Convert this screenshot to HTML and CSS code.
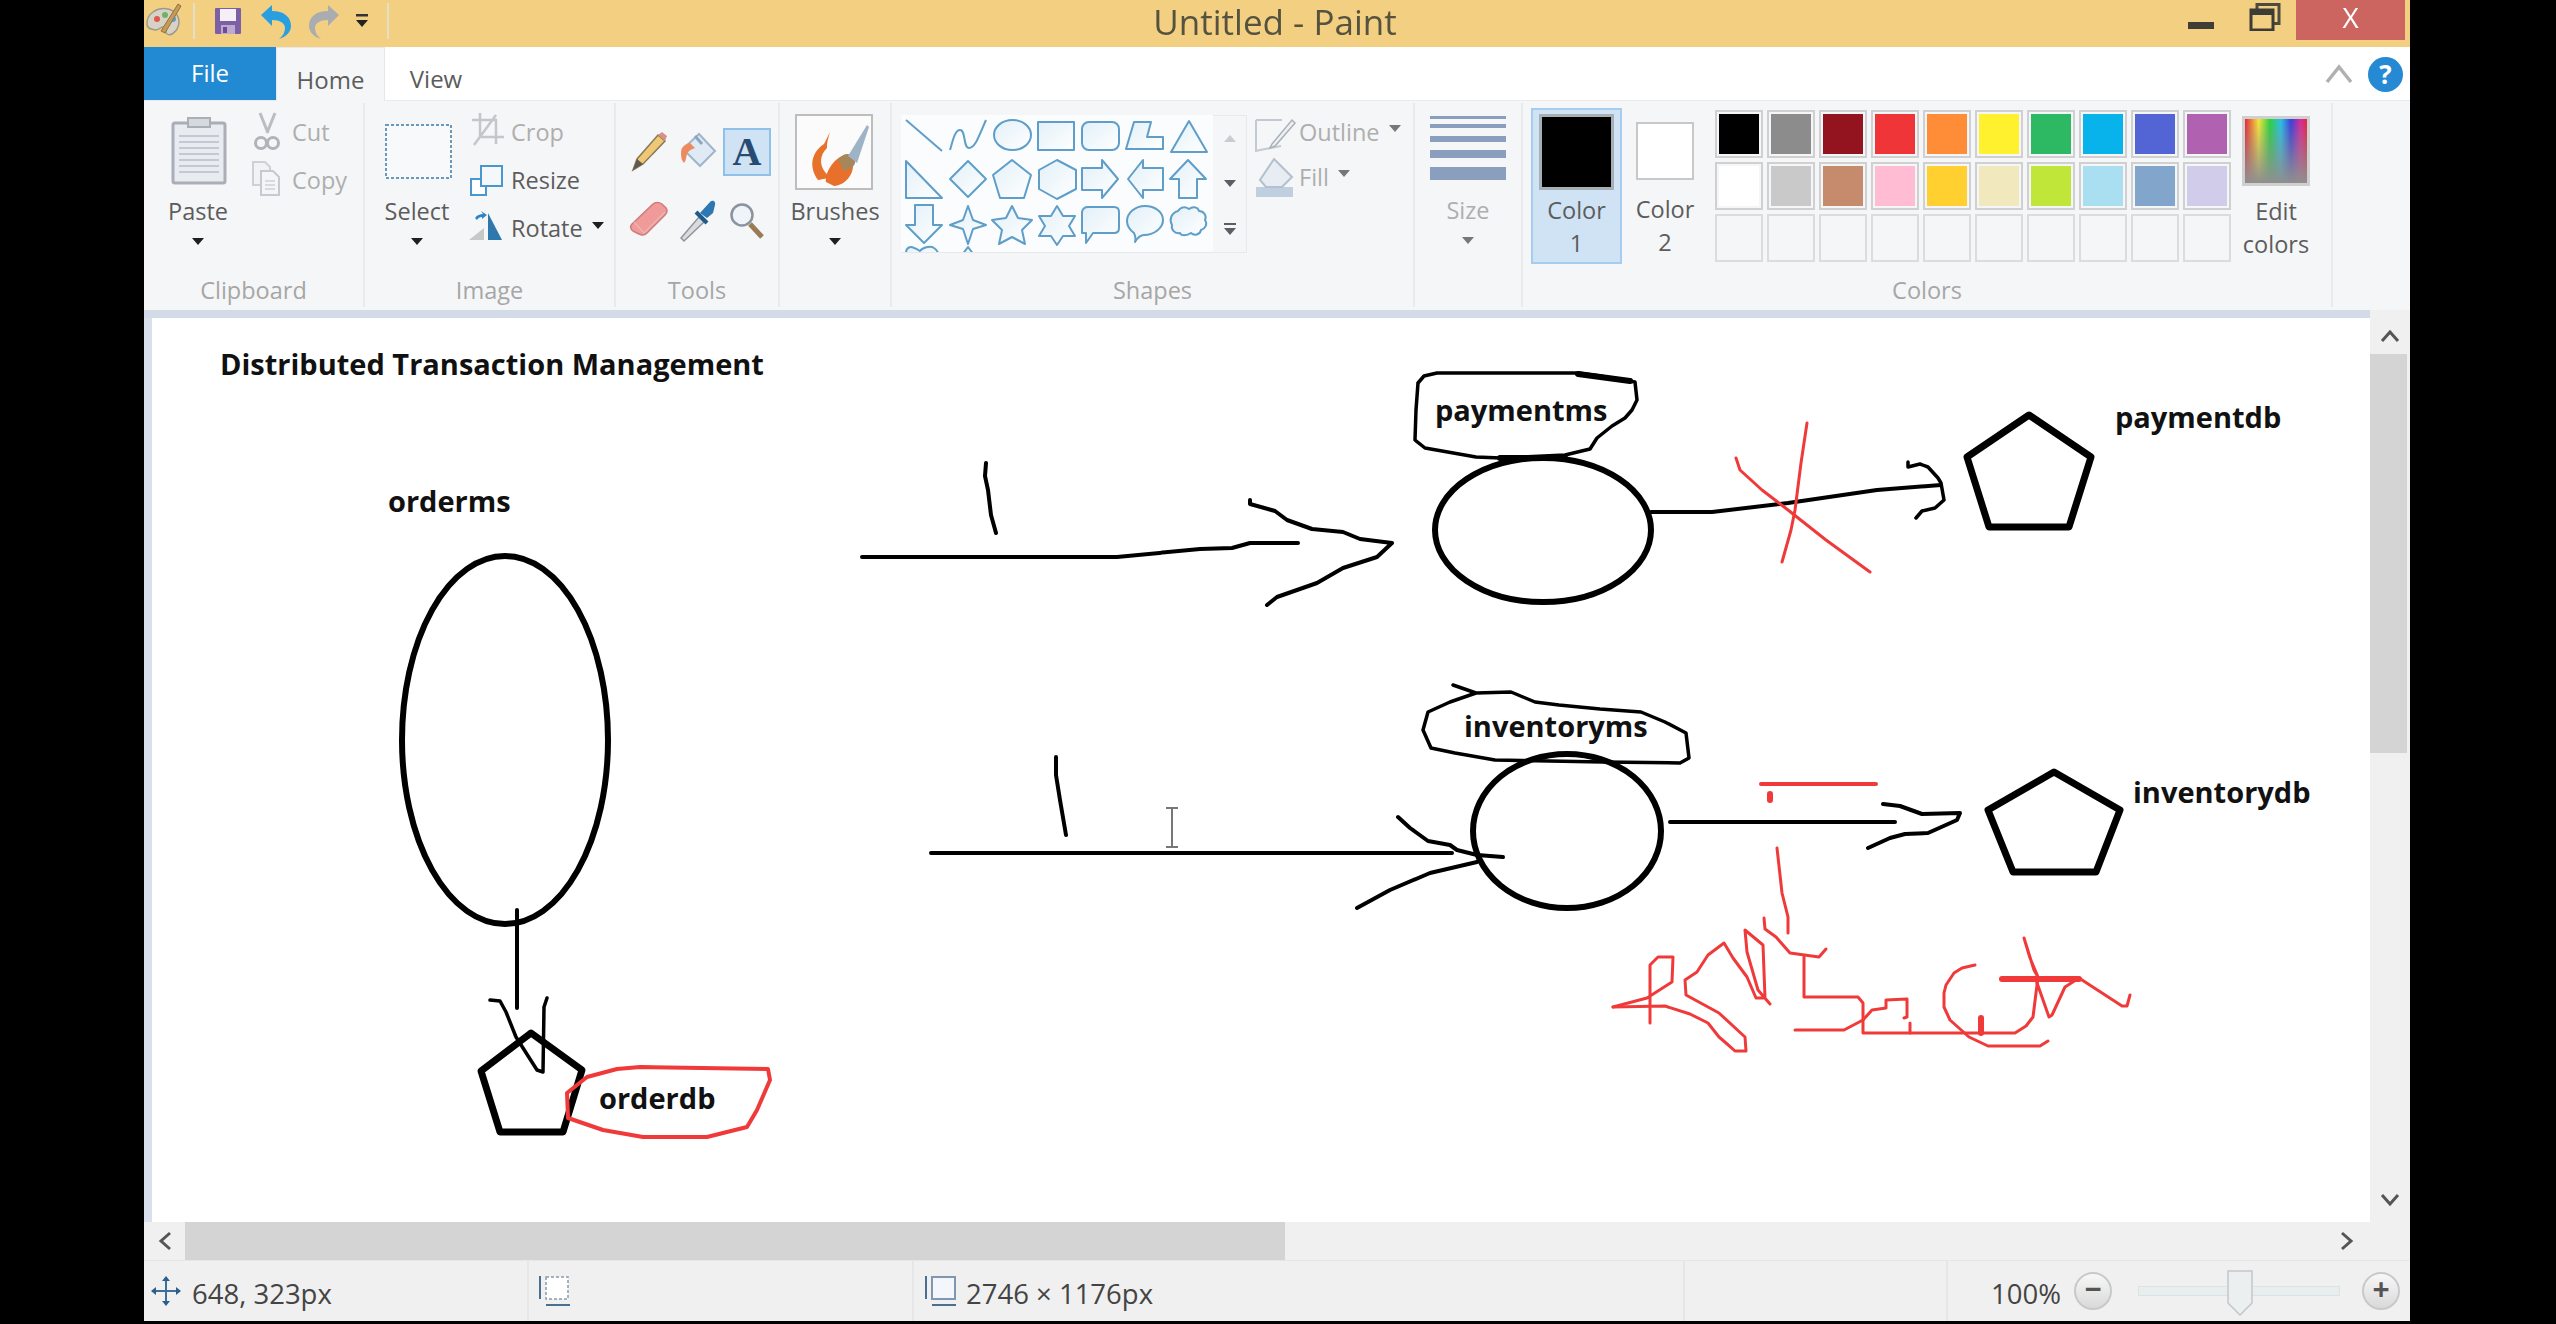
FILE: index.html
```html
<!DOCTYPE html>
<html lang="en">
<head>
<meta charset="utf-8">
<title>Untitled - Paint</title>
<link rel="stylesheet" href="styles.css">
</head>
<body>
<div class="window">
  <header class="titlebar">
    <div class="qat">
      <svg class="qat-icon" width="40" height="40" viewBox="0 0 40 40"><path d="M3 24C2 12 14 6 24 8c9 2 13 10 10 18-2 6-8 9-11 7-3-2 1-6-3-7-4-1-5 4-9 3-4-1-7-1-8-5z" fill="#d8d2c4" stroke="#9a9a90" stroke-width="1.5"/><circle cx="13" cy="18" r="3" fill="#e0574f"/><circle cx="21" cy="14" r="3" fill="#6eb26a"/><circle cx="29" cy="18" r="3" fill="#5a9bd5"/><path d="M17 30L34 3l3 2-16 27z" fill="#c99a55" stroke="#8d7440"/></svg>
      <span class="qat-sep"></span>
      <svg class="qat-save" width="28" height="28" viewBox="0 0 28 28"><rect x="1" y="1" width="26" height="26" rx="1" fill="#7d5fa6"/><rect x="6" y="2" width="16" height="12" fill="#f4f0f5"/><rect x="7" y="18" width="14" height="9" fill="#bda9cf"/><rect x="9" y="20" width="4" height="6" fill="#6a4d92"/></svg>
      <svg class="qat-undo" width="34" height="36" viewBox="0 0 34 36"><path d="M2 12L13 2v6c12 0 19 6 19 15 0 6-5 11-12 13 4-3 6-7 6-11 0-5-5-8-13-8v6z" fill="#2a9fe0"/></svg>
      <svg class="qat-redo" width="34" height="36" viewBox="0 0 34 36"><path d="M32 12L21 2v6C9 8 2 14 2 23c0 6 5 11 12 13-4-3-6-7-6-11 0-5 5-8 13-8v6z" fill="#a9adb0"/></svg>
      <svg class="qat-caret" width="14" height="16" viewBox="0 0 14 16"><rect x="1" y="1" width="12" height="2.5" fill="#333"/><path d="M1 7h12l-6 7z" fill="#222"/></svg>
      <span class="qat-sep"></span>
    </div>
    <div class="title">Untitled - Paint</div>
    <div class="winbtns">
      <span class="min"></span>
      <svg class="restore" width="32" height="28" viewBox="0 0 32 28"><rect x="8" y="1.500" width="22" height="19" fill="none" stroke="#4d4a42" stroke-width="3"/><rect x="2" y="7" width="22" height="20" fill="#f3cf82" stroke="#3d3b35" stroke-width="3"/><rect x="2" y="7" width="22" height="5" fill="#3d3b35"/></svg>
      <span class="close">X</span>
    </div>
  </header>

  <nav class="tabs">
    <span class="tab-file">File</span>
    <span class="tab-home">Home</span>
    <span class="tab-view">View</span>
    <span class="tabs-space"></span>
    <svg class="chev" width="28" height="20" viewBox="0 0 28 20"><path d="M2 18L14 3l12 15" fill="none" stroke="#aeb0b2" stroke-width="3.500"/></svg>
    <span class="help">?</span>
  </nav>

  <section class="ribbon">
    <div class="group g-clip">
      <div class="body">
        <div class="big">
          <svg class="big-ic" width="80" height="80" viewBox="158 117 80 80"><rect x="173" y="123" width="52" height="60" rx="2" fill="#e8ebf0" stroke="#a9aeb7" stroke-width="3"/><rect x="188" y="118" width="22" height="9" fill="#d6d9dd" stroke="#a9aeb7" stroke-width="2"/><path d="M179 136h40M179 142h40M179 148h40M179 154h40M179 160h40M179 166h40M179 172h40" stroke="#c3c8d2" stroke-width="2"/></svg>
          <span class="big-label">Paste</span>
          <span class="caret"></span>
        </div>
        <div class="small-col">
          <div class="row">
            <svg class="row-ic" width="40" height="40" viewBox="250 113 40 40"><path d="M262 114l8 20M277 114l-8 20" stroke="#b9bdc2" stroke-width="3"/><circle cx="263" cy="144" r="5.500" fill="none" stroke="#b0b4b9" stroke-width="3"/><circle cx="275" cy="144" r="5.500" fill="none" stroke="#b0b4b9" stroke-width="3"/></svg>
            <span class="muted">Cut</span>
          </div>
          <div class="row">
            <svg class="row-ic" width="40" height="40" viewBox="250 161 40 40"><path d="M255 163h12l5 5v18h-17z" fill="#f0f2f4" stroke="#cdd1d6" stroke-width="2"/><path d="M263 172h12l6 6v18h-18z" fill="#f4f5f7" stroke="#c6cad0" stroke-width="2"/><path d="M267 182h10M267 186h10M267 190h10" stroke="#cdd1d6" stroke-width="1.500"/></svg>
            <span class="muted">Copy</span>
          </div>
        </div>
      </div>
      <div class="group-label">Clipboard</div>
    </div>

    <div class="group g-image">
      <div class="body">
        <div class="big">
          <svg class="big-ic" width="80" height="80" viewBox="377 117 80 80"><rect x="386" y="125" width="65" height="53" fill="#f8f9fa" stroke="#6d98b8" stroke-width="2" stroke-dasharray="3 2"/></svg>
          <span class="big-label">Select</span>
          <span class="caret"></span>
        </div>
        <div class="small-col">
          <div class="row">
            <svg class="row-ic" width="40" height="40" viewBox="467 113 40 40"><path d="M472 121h24v24M480 114v24h24M496 116l-22 30" fill="none" stroke="#c3c7cc" stroke-width="2.500"/></svg>
            <span class="muted">Crop</span>
          </div>
          <div class="row">
            <svg class="row-ic" width="40" height="40" viewBox="467 161 40 40"><rect x="471" y="180" width="15" height="16" fill="#fff" stroke="#4a96cf" stroke-width="2"/><rect x="481" y="167" width="21" height="20" fill="#f5f8fb" stroke="#4a96cf" stroke-width="2"/></svg>
            <span>Resize</span>
          </div>
          <div class="row">
            <svg class="row-ic" width="40" height="40" viewBox="467 209 40 40"><path d="M469 241l15-12v12z" fill="#c5c9c8"/><path d="M488 214l14 27h-14z" fill="#2f78ad"/><path d="M475 219c2-3 5-4 8-4l-2-3 6 4-5 4v-2c-2 0-4 1-5 3z" fill="#2a86c8"/></svg>
            <span>Rotate</span><span class="caret inline"></span>
          </div>
        </div>
      </div>
      <div class="group-label">Image</div>
    </div>

    <div class="group g-tools">
      <div class="tool-grid">
        <svg width="48" height="48" viewBox="625 128 48 48"><path d="M633 170l4-11 21-24 7 6-22 23z" fill="#eec878" stroke="#8a7a50" stroke-width="1.500"/><path d="M633 170l4-11 6 5z" fill="#5f5a4f"/><path d="M658 135l7 6 2-5-5-4z" fill="#d98f8a"/></svg>
        <svg width="48" height="48" viewBox="674 128 48 48"><path d="M699 134l16 17-15 15-17-17z" fill="#dfeaf5" stroke="#9fb5ca" stroke-width="2"/><path d="M695 136l7 8" stroke="#8da7c0" stroke-width="3"/><path d="M690 143c-5 1-9 4-9 10 0 5 1 8 3 10 2-2 2-6 3-9 1-3 5-5 8-6z" fill="#ee8a5f"/></svg>
        <span class="tool-a">A</span>
        <svg width="48" height="48" viewBox="625 195 48 48"><path d="M632 224l21-20c2-2 6-2 9 0l4 4c2 3 1 5-1 7l-18 18c-3 3-6 2-8 1l-6-3c-3-2-3-5-1-7z" fill="#f19a9a" stroke="#d17a7a" stroke-width="1.500"/><path d="M634 222l10 11 21-21" fill="none" stroke="#e8b6b2" stroke-width="1.500"/></svg>
        <svg width="48" height="48" viewBox="674 195 48 48"><path d="M681 238l18-21 5 5-20 19z" fill="#d9dcdf" stroke="#8f959b" stroke-width="1.500"/><path d="M700 213l10-11c3-3 6 0 5 3l-2 8-6 5z" fill="#2d77b2"/><path d="M696 212l11 11" stroke="#1d5b8c" stroke-width="4"/></svg>
        <svg width="48" height="48" viewBox="723 195 48 48"><circle cx="742" cy="215" r="10.500" fill="#eef4f9" stroke="#8b949c" stroke-width="2.500"/><path d="M750 224l12 13" stroke="#9a7b55" stroke-width="5"/></svg>
      </div>
      <div class="group-label tools-label">Tools</div>
    </div>

    <div class="group g-brush">
      <div class="body">
        <div class="big">
          <svg class="big-ic" width="80" height="80" viewBox="795 117 80 80"><rect x="796" y="115" width="76" height="74" fill="#fbfbfb" stroke="#bdbdbd" stroke-width="2"/><path d="M818 180c-10-14-6-28 6-36l6-12c-3 10-3 12-3 16-7 7-8 16-2 24 5 6 5 6-7 8z" fill="#e7722b"/><path d="M826 182c-2-8 8-24 17-26l10 7c1 12-8 22-19 23z" fill="#e8702a"/><path d="M838 160c3-5 7-6 10-6 5 1 8 5 7 9-1 4-6 7-11 8z" fill="#a8865c"/><path d="M848 156l19-31 2 2-12 36z" fill="#9eb3c6"/></svg>
          <span class="big-label">Brushes</span>
          <span class="caret"></span>
        </div>
      </div>
      <div class="group-label">&nbsp;</div>
    </div>

    <div class="group g-shapes">
      <div class="body shapes-body">
        <div class="gallery">
          <svg class="gal-svg" width="312" height="138" viewBox="901 115 312 138">
            <defs>
              <linearGradient id="sg" x1="0" y1="0" x2="1" y2="1"><stop offset="0" stop-color="#e2f0f8"/><stop offset="1" stop-color="#ffffff"/></linearGradient>
            </defs>
            <g class="sh">
              <path d="M906 120l36 31" fill="none"/>
              <path d="M950 150c3-10 5-20 10-20 6 0 3 18 9 18s9-10 17-28" fill="none"/>
              <ellipse cx="1012.500" cy="135" rx="18.500" ry="15"/>
              <rect x="1038" y="122" width="36" height="28"/>
              <rect x="1082" y="122" width="37" height="28" rx="7"/>
              <path d="M1126 149l8-27h17l-4 15h16v12z"/>
              <path d="M1189 121l18 31h-36z"/>
              <path d="M906 161l36 37h-36z"/>
              <path d="M968 161l18 18-18 18-18-18z"/>
              <path d="M1012 160l19 15-7 23h-24l-7-23z"/>
              <path d="M1057 160l19 10v19l-19 10-18-10v-19z"/>
              <path d="M1082 168h20v-8l16 19-16 19v-8h-20z"/>
              <path d="M1163 168h-20v-8l-15 19 15 19v-8h20z"/>
              <path d="M1188 160l18 19h-9v19h-18v-19h-9z"/>
              <path d="M915 205h18v20h9l-18 18-18-18h9z"/>
              <path d="M968 206l5 14 13 5-13 4-5 15-5-15-13-4 13-5z"/>
              <path d="M1012 206l6 12 14 2-10 10 3 14-13-7-13 7 3-14-10-10 14-2z"/>
              <path d="M1057 206l6 10h12l-6 10 6 10h-12l-6 9-6-9h-12l6-10-6-10h12z"/>
              <path d="M1088 207h26q5 0 5 5v16q0 5-5 5h-21l-7 10v-10h-4l0-21q1-5 6-5z"/>
              <path d="M1145 206c10 0 18 6 18 14s-9 15-19 15c-3 0-6 2-9 7 1-4 0-7-1-9-4-3-7-7-7-12 0-8 8-15 18-15z"/>
              <path d="M1178 211c3-5 8-4 11-2 4-3 9-2 10 2 5 0 8 5 6 9 3 4 0 9-4 10-1 5-7 6-10 3-4 3-10 3-11 0-6 1-9-4-8-8-3-5-1-12 6-14z"/>
              <path d="M906 253c0-6 5-7 8-5 4 1 5 3 6 3 2-3 10-6 14-3 3 2 5 6 5 8z"/>
              <path d="M968 247l6 8h-12z"/>
            </g>
          </svg>
        </div>
        <div class="gal-scroll">
          <span class="gs-btn"><i class="up"></i></span>
          <span class="gs-btn"><i class="down"></i></span>
          <span class="gs-btn"><b class="bar"></b><i class="down"></i></span>
        </div>
        <div class="small-col tight">
          <div class="row">
            <svg class="row-ic" width="40" height="40" viewBox="1255 113 40 40"><path d="M1256 121h26M1256 121v31l4-1 21-4" fill="none" stroke="#c3cad1" stroke-width="2"/><path d="M1272 145l20-24 3 3-20 23-5 2z" fill="#eef1f4" stroke="#aab1b9" stroke-width="1.500"/></svg>
            <span class="muted">Outline</span><span class="caret inline grey"></span>
          </div>
          <div class="row">
            <svg class="row-ic" width="40" height="40" viewBox="1255 158 40 40"><rect x="1256" y="188" width="37" height="10" fill="#bfcfe0"/><path d="M1274 160l18 18-10 10h-16l-6-7z" fill="#e7edf3" stroke="#b3c0cd" stroke-width="2"/></svg>
            <span class="muted">Fill</span><span class="caret inline grey"></span>
          </div>
        </div>
      </div>
      <div class="group-label">Shapes</div>
    </div>

    <div class="group g-size">
      <div class="body">
        <div class="big">
          <div class="size-lines">
            <i class="l1"></i><i class="l2"></i><i class="l3"></i><i class="l4"></i><i class="l5"></i>
          </div>
          <span class="big-label muted">Size</span>
          <span class="caret grey"></span>
        </div>
      </div>
      <div class="group-label">&nbsp;</div>
    </div>

    <div class="group g-colors">
      <div class="body colors-body">
        <div class="color-btn active">
          <span class="sw1"></span>
          <span class="color-text">Color<br>1</span>
        </div>
        <div class="color-btn second">
          <span class="sw2"></span>
          <span class="color-text">Color<br>2</span>
        </div>
        <div class="palette">
          <span class="cell"><i class="c-000"></i></span><span class="cell"><i class="c-gry"></i></span><span class="cell"><i class="c-dred"></i></span><span class="cell"><i class="c-red"></i></span><span class="cell"><i class="c-org"></i></span><span class="cell"><i class="c-yel"></i></span><span class="cell"><i class="c-grn"></i></span><span class="cell"><i class="c-cyn"></i></span><span class="cell"><i class="c-blu"></i></span><span class="cell"><i class="c-pur"></i></span>
          <span class="cell"><i class="c-wht"></i></span><span class="cell"><i class="c-lgr"></i></span><span class="cell"><i class="c-brn"></i></span><span class="cell"><i class="c-pnk"></i></span><span class="cell"><i class="c-gld"></i></span><span class="cell"><i class="c-crm"></i></span><span class="cell"><i class="c-lim"></i></span><span class="cell"><i class="c-sky"></i></span><span class="cell"><i class="c-stl"></i></span><span class="cell"><i class="c-lav"></i></span>
          <span class="cell empty"></span><span class="cell empty"></span><span class="cell empty"></span><span class="cell empty"></span><span class="cell empty"></span><span class="cell empty"></span><span class="cell empty"></span><span class="cell empty"></span><span class="cell empty"></span><span class="cell empty"></span>
        </div>
        <div class="edit-col">
          <span class="rainbow"></span>
          <span class="color-text">Edit<br>colors</span>
        </div>
      </div>
      <div class="group-label">Colors</div>
    </div>
  </section>
  <div class="band"></div>

  <main class="work">
    <svg class="drawing" width="2218" height="904" viewBox="152 318 2218 904">
      <text class="lbl" x="220" y="375">Distributed Transaction Management</text>
      <text class="lbl" x="388" y="512">orderms</text>
      <text class="lbl" x="1435" y="421">paymentms</text>
      <text class="lbl" x="2115" y="428">paymentdb</text>
      <text class="lbl" x="1464" y="737">inventoryms</text>
      <text class="lbl" x="2133" y="803">inventorydb</text>
      <text class="lbl" x="599" y="1109">orderdb</text>

      <g class="ink">
        <ellipse class="w6" cx="505" cy="740" rx="103" ry="184"/>
        <path class="w4" d="M517 910V1008"/>
        <path class="w3" d="M490 1000L500 1001 506 1012 516 1037 537 1070 543 1072 544 1007 547 998"/>
        <path class="w7" d="M531 1033L582 1070 563 1132H500L481 1071Z"/>

        <path class="w4" d="M986 463L985 476 988 490 991 515 996 533"/>
        <path class="w4" d="M862 557H1117L1200 549 1232 548 1250 543H1298"/>
        <path class="w4" d="M1250 500V504L1275 511 1287 520 1312 529 1343 532 1360 539 1392 543 1377 557 1343 568 1317 583 1277 597 1267 605"/>

        <path class="w3" d="M1418 383L1424 376 1437 373H1578L1600 376 1635 382 1637 400 1632 410 1625 418 1612 426 1597 438 1590 449 1565 455 1501 458 1476 457 1425 448 1415 440 1416 410 1418 383"/>
        <path class="w6" d="M1578 374L1630 381"/>
        <path class="w6" d="M1500 458H1565"/>
        <ellipse class="w6" cx="1543" cy="530" rx="108" ry="72"/>
        <path class="w4" d="M1651 512H1712L1788 503 1877 490 1941 485"/>
        <path class="w3" d="M1908 462V467L1920 464 1928 467 1938 478 1941 483 1944 500 1935 508 1922 511 1916 518"/>
        <path class="w7" d="M2029 415L2091 457 2069 527H1989L1967 457Z"/>

        <path class="w3" d="M1453 685L1476 693 1511 692 1535 702 1559 705 1600 709 1641 712 1665 722 1686 733 1689 758 1680 763 1603 762 1495 760 1455 753 1431 748 1423 730 1428 712 1450 702 1476 693"/>
        <ellipse class="w6" cx="1567" cy="831" rx="94" ry="77"/>
        <path class="w4" d="M1670 822H1895"/>
        <path class="w4" d="M1883 804L1900 806 1922 814 1960 813 1957 820 1928 833 1905 834 1890 838 1868 848"/>
        <path class="w7" d="M2054 772L2120 810 2096 872H2013L1988 810Z"/>

        <path class="w4" d="M1056 757L1056 775 1060 800 1066 835"/>
        <path class="w4" d="M931 853H1452"/>
        <path class="w4" d="M1398 817L1410 828 1428 841 1450 845 1457 850 1477 855 1503 857"/>
        <path class="w4" d="M1477 862L1430 873 1390 890 1357 908"/>
      </g>

      <g class="red">
        <path class="r4" d="M567 1093L587 1077 617 1069 640 1067 768 1069 770 1080 757 1110 747 1127 707 1137 643 1137 603 1130 568 1118Z"/>
        <path class="r3" d="M1807 423L1801 463 1795 510 1791 530 1782 562"/>
        <path class="r3" d="M1736 458L1740 470 1762 490 1788 510 1826 540 1870 572"/>
        <path class="r4" d="M1761 784H1876"/>
        <path class="r5" d="M1770 794V800"/>
        <path class="r3" d="M1777 848L1782 893 1788 917V933"/>
        <path class="r3" d="M1613 1007L1647 998 1672 982 1673 957H1658L1650 965V1023"/>
        <path class="r3" d="M1613 1007L1665 1006 1690 1014 1708 1023 1719 1037 1726 1043 1735 1051H1746L1745 1037 1719 1013 1686 995 1685 980 1697 972 1708 955 1724 943 1733 958 1747 977 1756 998H1765L1763 945 1745 930 1747 952 1758 990 1770 1004"/>
        <path class="r3" d="M1764 918L1765 929 1776 937 1790 953 1819 957 1826 949"/>
        <path class="r3" d="M1804 957V997H1858L1863 1003V1033H2015L2026 1026 2033 1017 2038 977 2030 958 2024 938 2034 970 2038 977"/>
        <path class="r3" d="M1795 1030H1844L1863 1020 1872 1010 1886 1008V1000L1907 999V1017L1904 1018"/>
        <path class="r3" d="M1910 1023V1033"/>
        <path class="r3" d="M1975 965L1962 968 1954 973 1946 985 1944 993V1007L1950 1020 1969 1037 1988 1046H2040L2048 1041"/>
        <path class="r5" d="M1981 1018V1033"/>
        <path class="r5" d="M2002 979H2079"/>
        <path class="r3" d="M2036 980L2049 1017 2052 1015 2065 987 2079 978 2122 1006H2127L2130 995"/>
      </g>

      <path class="ibeam" d="M1166 808H1178M1172 808V847M1166 847H1178"/>
    </svg>
    <div class="vscroll">
      <span class="v-btn"><svg width="22" height="14" viewBox="0 0 22 14"><path d="M3 12L11 3l8 9" fill="none" stroke="#555" stroke-width="3"/></svg></span>
      <span class="v-thumb"></span>
      <span class="v-rest"></span>
      <span class="v-btn end"><svg width="22" height="14" viewBox="0 0 22 14"><path d="M3 2l8 9 8-9" fill="none" stroke="#555" stroke-width="3"/></svg></span>
    </div>
  </main>

  <div class="hscroll">
    <span class="h-btn"><svg width="14" height="22" viewBox="0 0 14 22"><path d="M12 3L3 11l9 8" fill="none" stroke="#555" stroke-width="3"/></svg></span>
    <span class="h-thumb"></span>
    <span class="h-rest"></span>
    <span class="h-btn right"><svg width="14" height="22" viewBox="0 0 14 22"><path d="M2 3l9 8-9 8" fill="none" stroke="#555" stroke-width="3"/></svg></span>
  </div>

  <footer class="status">
    <div class="st st1">
      <svg width="30" height="30" viewBox="0 0 30 30"><path d="M15 1v28M1 15h28" stroke="#3d6f98" stroke-width="2"/><path d="M15 0l-4 5h8zM15 30l-4-5h8zM0 15l5-4v8zM30 15l-5-4v8z" fill="#2d5f8c"/></svg>
      <span class="st-text">648, 323px</span>
    </div>
    <div class="st st2">
      <svg width="34" height="32" viewBox="0 0 34 32"><rect x="9" y="2" width="22" height="22" fill="#fff" stroke="#8a9aad" stroke-width="1.500" stroke-dasharray="3 2"/><path d="M3 1v23M9 30h24" stroke="#4a6f90" stroke-width="2"/></svg>
    </div>
    <div class="st st3">
      <svg width="34" height="32" viewBox="0 0 34 32"><rect x="9" y="2" width="23" height="22" fill="#f3f7fb" stroke="#7f97b0" stroke-width="2"/><path d="M3 1v23M9 30h24" stroke="#4a6f90" stroke-width="2"/></svg>
      <span class="st-text">2746 × 1176px</span>
    </div>
    <div class="st st4"></div>
    <div class="st st5">
      <span class="zoom-txt st-text">100%</span>
      <span class="zbtn">−</span>
      <span class="slider"><i class="knob"><svg width="26" height="46" viewBox="0 0 26 46"><path d="M1 1h24v32L13 45 1 33z" fill="#ecefef" stroke="#c4c7c7" stroke-width="1.500"/></svg></i></span>
      <span class="zbtn">+</span>
    </div>
  </footer>
</div>
</body>
</html>
```
FILE: styles.css
```css
* { box-sizing: border-box; }
html, body { margin: 0; height: 100%; background: #000; overflow: hidden; }
body { font-family: "Open Sans", "Liberation Sans", sans-serif; font-size: 23.5px; color: #5c5c5c; }
.window { width: 2266px; height: 1321px; margin-left: 144px; display: flex; flex-direction: column; background: #f0f0f0; filter: blur(0.6px); }

.titlebar { height: 47px; background: #f3cf82; display: flex; align-items: flex-start; position: relative; flex: none; }
.qat { display: flex; align-items: center; height: 42px; width: 260px; }
.qat-sep { width: 2px; height: 36px; background: #e4dfc9; }
.qat-icon { margin-right: 9px; }
.qat-save { margin-left: 19px; }
.qat-undo { margin-left: 17px; }
.qat-redo { margin-left: 14px; }
.qat-caret { margin-left: 14px; margin-right: 18px; }
.title { position: absolute; left: 1008px; top: 0; width: 246px; display: flex; justify-content: center; font-size: 35px; line-height: 44px; color: #55523f; white-space: nowrap; }
.winbtns { margin-left: auto; display: flex; align-items: flex-start; padding-right: 5px; }
.min { width: 26px; height: 7px; background: #3f3d36; margin-top: 22px; margin-right: 35px; }
.restore { margin-top: 3px; margin-right: 15px; }
.close { width: 109px; height: 40px; background: #cc6460; color: #fff; text-align: center; font-size: 28px; line-height: 34px; }

.tabs { height: 54px; background: #fff; display: flex; align-items: stretch; flex: none; border-bottom: 1px solid #e9eaeb; }
.tab-file { width: 132px; background: #2289d3; color: #fff; text-align: center; font-size: 24px; line-height: 52px; }
.tab-home { width: 109px; background: #f5f6f7; border: 1px solid #e6e7e8; border-bottom: 0; text-align: center; line-height: 64px; font-size: 24px; margin-bottom: -1px; }
.tab-view { width: 102px; text-align: center; line-height: 64px; font-size: 24px; }
.tabs-space { flex: 1; }
.chev { margin: 17px 15px 0 0; }
.help { width: 35px; height: 35px; margin: 10px 7px 0 0; border-radius: 50%; background: #2589d3; color: #fff; font-weight: 700; font-size: 26px; line-height: 35px; text-align: center; }

.ribbon { height: 209px; background: #f5f6f7; display: flex; flex: none; }
.group { display: flex; flex-direction: column; border-right: 2px solid #e8eaec; flex: none; height: 204px; margin-top: 2px; }
.body { height: 170px; display: flex; }
.group-label { height: 34px; line-height: 34px; text-align: center; color: #a6a6a6; }
.g-clip { width: 221px; }
.g-image { width: 251px; }
.g-tools { width: 164px; }
.g-brush { width: 112px; }
.g-shapes { width: 523px; }
.g-size { width: 108px; }
.g-colors { width: 810px; }

.big { width: 80px; display: flex; flex-direction: column; align-items: center; margin-top: 14px; flex: none; }
.big-ic { height: 80px; overflow: visible; flex: none; }
.big-label { height: 30px; line-height: 28px; white-space: nowrap; }
.caret { width: 0; height: 0; border: 6px solid transparent; border-top: 7px solid #1f1f1f; border-bottom: 0; margin-top: 11px; }
.caret.inline { margin: 0 0 6px 5px; }
.caret.grey { border-top-color: #777; }
.g-clip .big { margin-left: 14px; }
.g-image .big { margin-left: 12px; }
.g-brush .big { margin-left: 15px; }
.g-size .big { margin-left: 13px; }

.small-col { margin-left: 10px; margin-top: 5px; display: flex; flex-direction: column; }
.row { height: 48px; display: flex; align-items: center; gap: 4px; white-space: nowrap; }
.row-ic { flex: none; overflow: visible; }
.muted { color: #aeaeae; }
.tight .row { height: 45px; }
.small-col.tight { margin-left: 8px; margin-top: -6px; }

.tool-grid { display: grid; grid-template-columns: repeat(3, 48px); grid-auto-rows: 48px; column-gap: 1px; row-gap: 19px; padding: 25px 0 0 9px; height: 170px; }
.tool-grid svg { overflow: visible; }
.tool-a { background: #cfe3f5; border: 2px solid #8fc0ea; color: #274b73; font: 700 40px/44px "Liberation Serif", serif; text-align: center; }

.shapes-body { padding: 12px 0 0 9px; }
.gallery { width: 312px; height: 138px; background: #fbfcfd; overflow: hidden; border-bottom: 1px solid #e8e8e8; flex: none; }
.gal-svg { display: block; }
.sh * { fill: url(#sg); stroke: #5e9ec9; stroke-width: 2; stroke-linejoin: round; }
.sh path[fill="none"] { fill: none; }
.gal-scroll { width: 34px; height: 138px; display: flex; flex-direction: column; border: 1px solid #e8e9ea; border-left: 0; flex: none; }
.gs-btn { flex: 1; display: flex; flex-direction: column; align-items: center; justify-content: center; gap: 3px; }
.gs-btn i { width: 0; height: 0; border: 6px solid transparent; }
.gs-btn .up { border-bottom: 7px solid #c8ccd0; border-top: 0; }
.gs-btn .down { border-top: 7px solid #5a5f66; border-bottom: 0; }
.gs-btn .bar { width: 12px; height: 2px; background: #5a5f66; }

.size-lines { width: 76px; height: 80px; display: flex; flex-direction: column; flex: none; margin-top: -1px; }
.size-lines i { display: block; background: #8a9fbd; }
.l1 { height: 3px; margin-bottom: 5px; }
.l2 { height: 4px; margin-bottom: 8px; }
.l3 { height: 6px; margin-bottom: 8px; }
.l4 { height: 8px; margin-bottom: 9px; }
.l5 { height: 13px; }

.colors-body { padding-left: 8px; align-items: flex-start; }
.color-btn { width: 91px; height: 156px; display: flex; flex-direction: column; align-items: center; margin-top: 5px; }
.color-btn.active { background: #cfe3f5; border: 2px solid #a6cdf0; }
.color-btn.second { width: 86px; }
.sw1 { width: 75px; height: 76px; background: #000; border: 3px solid #a6aeb6; margin-top: 4px; flex: none; }
.sw2 { width: 58px; height: 58px; background: #fff; border: 2px solid #c8c8c8; margin-top: 14px; flex: none; }
.color-text { text-align: center; line-height: 33px; display: block; }
.active .color-text { margin-top: 4px; }
.second .color-text { margin-top: 13px; }
.palette { display: grid; grid-template-columns: repeat(10, 48px); grid-auto-rows: 48px; gap: 4px; margin: 7px 0 0 7px; }
.cell { border: 2px solid #d0d0d0; padding: 2px; display: block; }
.cell i { display: block; width: 100%; height: 100%; }
.cell.empty { border-color: #dcdcdc; }
.c-000 { background: #000; } .c-gry { background: #8c8c8c; } .c-dred { background: #93131f; } .c-red { background: #f03538; } .c-org { background: #ff8d38; }
.c-yel { background: #fff12e; } .c-grn { background: #2db863; } .c-cyn { background: #08b2ea; } .c-blu { background: #5364d4; } .c-pur { background: #b061b0; }
.c-wht { background: #fff; } .c-lgr { background: #c9c9c9; } .c-brn { background: #c68b6c; } .c-pnk { background: #ffbcd2; } .c-gld { background: #ffd02f; }
.c-crm { background: #f2e8bd; } .c-lim { background: #c0e63a; } .c-sky { background: #a9dff0; } .c-stl { background: #82a6cb; } .c-lav { background: #d1cce9; }
.edit-col { width: 82px; margin-left: 4px; display: flex; flex-direction: column; align-items: center; margin-top: 13px; }
.rainbow { width: 68px; height: 70px; border: 3px solid #cfcfcf; background: linear-gradient(180deg, transparent, #8f8f8f), linear-gradient(90deg, #e8233a, #f6e83a 22%, #2bd23f 40%, #2ac0e8 58%, #3b3fd8 74%, #d82a9a 90%, #e8233a); flex: none; }
.edit-col .color-text { margin-top: 9px; }

.band { height: 8px; background: #d3dbe8; margin-right: 40px; flex: none; }

.work { flex: 1; display: flex; min-height: 0; }
.drawing { display: block; background: #fff; margin-left: 8px; box-shadow: -8px 0 0 #d8e0ec; flex: none; }
.lbl { font: 700 29px "Open Sans", sans-serif; fill: #111; }
.ink * { fill: none; stroke: #000; stroke-linejoin: round; stroke-linecap: round; }
.w3 { stroke-width: 3.500; } .w4 { stroke-width: 4; } .w6 { stroke-width: 6; } .w7 { stroke-width: 7; }
.red * { fill: none; stroke: #f03a3a; stroke-linejoin: round; stroke-linecap: round; }
.r3 { stroke-width: 3; } .r4 { stroke-width: 4; } .r5 { stroke-width: 6; }
.ibeam { fill: none; stroke: #777; stroke-width: 2; }

.vscroll { width: 40px; display: flex; flex-direction: column; flex: none; }
.v-btn { height: 36px; display: flex; align-items: center; justify-content: center; flex: none; }
.v-btn.end { height: 44px; }
.v-thumb { height: 399px; width: 37px; background: #d4d4d4; flex: none; }
.v-rest { flex: 1; }

.hscroll { height: 38px; display: flex; align-items: stretch; flex: none; }
.h-btn { width: 41px; display: flex; align-items: center; justify-content: center; flex: none; }
.h-btn.right { margin-left: auto; margin-right: 43px; }
.h-thumb { width: 1100px; background: #d4d4d4; flex: none; }
.h-rest { flex: 1; }

.status { height: 61px; display: flex; align-items: stretch; border-top: 1px solid #e6e6e6; flex: none; color: #444; font-size: 27.5px; }
.st { display: flex; align-items: center; border-right: 2px solid #e6e6e6; flex: none; }
.st svg { flex: none; }
.st-text { padding-top: 5px; white-space: nowrap; }
.st1 { width: 385px; padding-left: 7px; gap: 11px; }
.st2 { width: 385px; padding-left: 8px; }
.st3 { width: 771px; padding-left: 9px; gap: 9px; }
.st4 { width: 263px; }
.st5 { flex: 1; border-right: 0; padding-left: 43px; }
.zoom-txt { width: 83px; flex: none; }
.zbtn { width: 38px; height: 38px; border-radius: 50%; border: 2px solid #c9c9c9; background: linear-gradient(180deg, #f8f8f8, #d9d9d9); color: #555; font-size: 30px; font-weight: 700; line-height: 30px; text-align: center; flex: none; }
.slider { width: 202px; height: 10px; margin: 0 22px 0 26px; background: #e8eded; border: 1px solid #dde2e2; position: relative; flex: none; }
.knob { position: absolute; left: 88px; top: -17px; display: block; }
```
